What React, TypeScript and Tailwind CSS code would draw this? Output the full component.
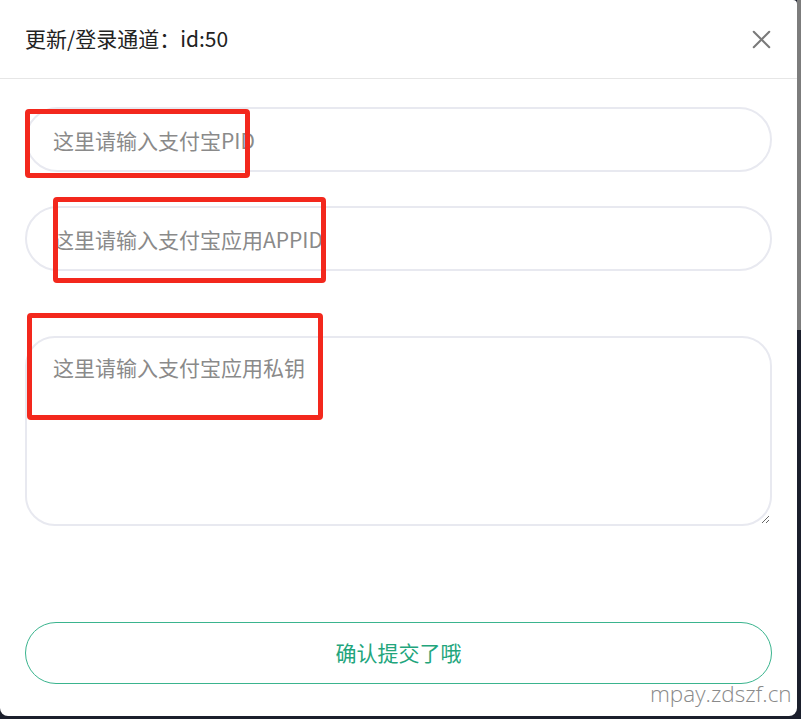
import { X } from 'lucide-react';

// annotation boxes drawn over the form
const marks = [
  { id: 'pid', cls: 'left-[25px] top-[109px] w-[225px] h-[69px]' },
  { id: 'appid', cls: 'left-[53px] top-[197px] w-[273px] h-[86px]' },
  { id: 'key', cls: 'left-[27px] top-[313px] w-[296px] h-[107px]' },
];

export default function App() {
  return (
    <div
      className="relative flex w-[801px] h-[719px] bg-[#1b1f2c] overflow-hidden"
      style={{ fontFamily: '"Noto Sans CJK SC", "Noto Sans", sans-serif' }}
    >
      {/* Dialog */}
      <div className="flex flex-col w-[797px] h-[716px] bg-white rounded-b-[8px] rounded-tr-[4px]">
        {/* Header */}
        <div className="flex items-center justify-between h-[79px] shrink-0 pl-[25px] pr-[24px] border-b border-[#e6e6e6]">
          <div className="text-[21px] leading-none text-[#222] -mt-[2px]">更新/登录通道：id:50</div>
          <X size={31} strokeWidth={1.6} className="text-[#7a7a7a] -mr-[4px]" />
        </div>

        {/* Form */}
        <div className="flex flex-col px-[25px] pt-[28px]">
          <input
            readOnly
            placeholder="这里请输入支付宝PID"
            className="h-[65px] w-full rounded-full border-2 border-[#e8e9f0] bg-white pl-[26px] pr-[26px] text-[21px] text-[#333] outline-none placeholder:text-[#8a8a8a]"
          />
          <input
            readOnly
            placeholder="这里请输入支付宝应用APPID"
            className="mt-[34px] h-[65px] w-full rounded-full border-2 border-[#e8e9f0] bg-white pl-[26px] pr-[26px] text-[21px] text-[#333] outline-none placeholder:text-[#8a8a8a]"
          />
          <textarea
            readOnly
            placeholder="这里请输入支付宝应用私钥"
            className="mt-[65px] h-[190px] w-full rounded-[30px] border-2 border-[#e8e9f0] bg-white px-[26px] pt-[13px] text-[21px] leading-[32px] text-[#333] outline-none placeholder:text-[#8a8a8a]"
          />
          <button className="mt-[96px] h-[62px] w-full rounded-full border border-[#3ab48e] bg-white text-[21px] text-[#22a57c]">
            确认提交了哦
          </button>
        </div>
      </div>

      {/* Backdrop strip at right edge */}
      <div className="flex flex-col w-[4px]">
        <div className="h-[330px] bg-[#7c7c7c]" />
        <div className="flex-1 bg-[#1b1f2c]" />
      </div>

      {marks.map((m) => (
        <div
          key={m.id}
          className={`absolute ${m.cls} border-[5px] border-[#f3281d] rounded-[4px]`}
        />
      ))}

      {/* Watermark */}
      <div
        className="absolute left-[650px] top-[679px] text-[22.5px] leading-[30px] text-[#8a8a8a] [text-shadow:0_0_2px_#fff,0_0_1px_#fff]"
        style={{ fontFamily: '"Open Sans", sans-serif', fontWeight: 300 }}
      >
        mpay.zdszf.cn
      </div>
    </div>
  );
}
